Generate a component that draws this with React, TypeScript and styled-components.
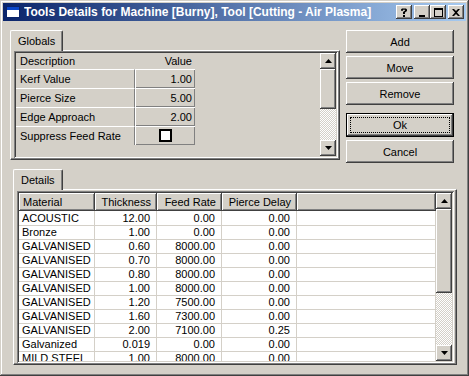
import styled, { createGlobalStyle, css } from "styled-components";

const GlobalStyle = createGlobalStyle`
  html, body { margin: 0; padding: 0; background: #d4d0c8; }
  * { box-sizing: border-box; }
`;

const raised = css`
  box-shadow: inset -1px -1px #404040, inset 1px 1px #ffffff, inset -2px -2px #808080, inset 2px 2px #d4d0c8;
`;

const sunken = css`
  box-shadow: inset 1px 1px #808080, inset -1px -1px #ffffff, inset 2px 2px #404040, inset -2px -2px #d4d0c8;
`;

const Window = styled.div`
  width: 469px;
  height: 376px;
  padding: 3px;
  background: #d4d0c8;
  font-family: "Liberation Sans", Arial, sans-serif;
  font-size: 11px;
  color: #000;
  display: flex;
  flex-direction: column;
  overflow: hidden;
  box-shadow: inset -1px -1px #404040, inset 1px 1px #d4d0c8, inset -2px -2px #808080, inset 2px 2px #ffffff;
`;

const TitleBar = styled.div`
  height: 18px;
  display: flex;
  align-items: center;
  padding: 0 2px 0 2px;
  background: linear-gradient(to right, #0a246a, #a6caf0);
  color: #fff;
  font-weight: bold;
  font-size: 12px;
`;

const TitleIcon = styled.svg`
  width: 16px;
  height: 16px;
  margin-right: 3px;
  flex: none;
`;

const TitleText = styled.span`
  flex: 1;
  white-space: nowrap;
  overflow: hidden;
`;

const CaptionButton = styled.div<{ $gap?: boolean }>`
  width: 16px;
  height: 14px;
  background: #d4d0c8;
  ${raised};
  display: flex;
  align-items: center;
  justify-content: center;
  margin-left: ${(p) => (p.$gap ? "2px" : "0")};
`;

const Body = styled.div`
  flex: 1;
  display: flex;
  flex-direction: column;
  padding: 9px 8px 0 7px;
`;

const TopRow = styled.div`
  display: flex;
  gap: 6px;
`;

const TabControl = styled.div<{ $width: number; $indent?: number; $top?: number }>`
  width: ${(p) => p.$width}px;
  margin-left: ${(p) => p.$indent ?? 0}px;
  margin-top: ${(p) => p.$top ?? 0}px;
  display: flex;
  flex-direction: column;
`;

const TabStrip = styled.div`
  display: flex;
  height: 20px;
`;

const Tab = styled.div`
  height: 21px;
  padding: 3px 7px 0 7px;
  background: #d4d0c8;
  border-top: 1px solid #fff;
  border-left: 1px solid #fff;
  border-right: 1px solid #404040;
  border-radius: 2px 2px 0 0;
  box-shadow: inset -1px 0 #808080;
  position: relative;
  z-index: 1;
  line-height: 14px;
`;

const TabPage = styled.div<{ $height: number; $pad: string }>`
  height: ${(p) => p.$height}px;
  padding: ${(p) => p.$pad};
  border-top: 1px solid #fff;
  border-left: 1px solid #fff;
  border-right: 1px solid #404040;
  border-bottom: 1px solid #404040;
  box-shadow: inset -1px -1px #808080;
  display: flex;
`;

const SunkenBox = styled.div`
  flex: 1;
  display: flex;
  padding: 2px;
  ${sunken};
  background: #d4d0c8;
  overflow: hidden;
`;

const PropList = styled.div`
  flex: 1;
  display: flex;
  flex-direction: column;
`;

const PropHeader = styled.div`
  height: 16px;
  display: grid;
  grid-template-columns: 119px 60px;
  align-items: center;
  & > span:first-child { padding-left: 4px; }
  & > span:last-child { text-align: right; padding-right: 3px; }
`;

const PropRow = styled.div`
  height: 19px;
  display: grid;
  grid-template-columns: 119px 60px;
`;

const PropName = styled.div`
  border-top: 1px solid #fff;
  border-right: 1px solid #808080;
  padding-left: 4px;
  display: flex;
  align-items: center;
`;

const PropValue = styled.div`
  box-shadow: inset 1px 1px #fff, inset -1px -1px #808080;
  display: flex;
  align-items: center;
  justify-content: flex-end;
  padding-right: 3px;
`;

const CheckCell = styled(PropValue)`
  justify-content: center;
  padding-right: 0;
`;

const CheckBox = styled.div`
  width: 13px;
  height: 13px;
  background: #fff;
  border: 2px solid #000;
`;

const ScrollBar = styled.div<{ $thumb: number }>`
  width: 16px;
  flex: none;
  display: flex;
  flex-direction: column;
  & > .thumb { height: ${(p) => p.$thumb}px; }
`;

const ScrollButton = styled.div`
  height: 16px;
  background: #d4d0c8;
  ${raised};
  display: flex;
  align-items: center;
  justify-content: center;
`;

const Thumb = styled.div`
  background: #d4d0c8;
  ${raised};
`;

const Track = styled.div`
  flex: 1;
  background-image: conic-gradient(#ffffff 25%, #d4d0c8 0 50%, #ffffff 0 75%, #d4d0c8 0);
  background-size: 2px 2px;
`;

const ButtonColumn = styled.div`
  width: 108px;
  display: flex;
  flex-direction: column;
  gap: 3px;
`;

const Button = styled.div<{ $default?: boolean }>`
  height: 23px;
  background: #d4d0c8;
  ${raised};
  display: flex;
  align-items: center;
  justify-content: center;
  ${(p) =>
    p.$default &&
    css`
      height: 24px;
      margin-top: 5px;
      border: 1px solid #000;
      position: relative;
      &::after {
        content: "";
        position: absolute;
        inset: 3px;
        border: 1px dotted #000;
      }
    `}
`;

const Table = styled.div`
  flex: 1;
  display: flex;
  flex-direction: column;
  overflow: hidden;
  background: #fff;
`;

const cols = "76px 62px 65px 75px 1fr";

const HeadRow = styled.div`
  height: 18px;
  flex: none;
  display: grid;
  grid-template-columns: ${cols};
  background: #d4d0c8;
`;

const HeadCell = styled.div<{ $right?: boolean }>`
  ${raised};
  display: flex;
  align-items: center;
  justify-content: ${(p) => (p.$right ? "flex-end" : "flex-start")};
  padding: 0 ${(p) => (p.$right ? "6px" : "0")} 0 ${(p) => (p.$right ? "0" : "4px")};
  white-space: nowrap;
`;

const DataRow = styled.div`
  height: 14px;
  flex: none;
  display: grid;
  grid-template-columns: ${cols};
`;

const DataCell = styled.div<{ $right?: boolean }>`
  border-right: 1px solid #d4d0c8;
  border-bottom: 1px solid #d4d0c8;
  display: flex;
  align-items: center;
  justify-content: ${(p) => (p.$right ? "flex-end" : "flex-start")};
  padding: 1px ${(p) => (p.$right ? "6px" : "0")} 0 ${(p) => (p.$right ? "0" : "3px")};
  white-space: nowrap;
  line-height: 13px;
`;

const Up = () => (
  <svg width="7" height="4" viewBox="0 0 7 4">
    <polygon points="3.5,0 7,4 0,4" fill="#000" />
  </svg>
);

const Down = () => (
  <svg width="7" height="4" viewBox="0 0 7 4">
    <polygon points="0,0 7,0 3.5,4" fill="#000" />
  </svg>
);

const rows: [string, string, string, string][] = [
  ["ACOUSTIC", "12.00", "0.00", "0.00"],
  ["Bronze", "1.00", "0.00", "0.00"],
  ["GALVANISED", "0.60", "8000.00", "0.00"],
  ["GALVANISED", "0.70", "8000.00", "0.00"],
  ["GALVANISED", "0.80", "8000.00", "0.00"],
  ["GALVANISED", "1.00", "8000.00", "0.00"],
  ["GALVANISED", "1.20", "7500.00", "0.00"],
  ["GALVANISED", "1.60", "7300.00", "0.00"],
  ["GALVANISED", "2.00", "7100.00", "0.25"],
  ["Galvanized", "0.019", "0.00", "0.00"],
  ["MILD STEEL", "1.00", "8000.00", "0.00"],
];

const props = [
  ["Kerf Value", "1.00"],
  ["Pierce Size", "5.00"],
  ["Edge Approach", "2.00"],
];

export default function App() {
  return (
    <>
      <GlobalStyle />
      <Window>
        <TitleBar>
          <TitleIcon viewBox="0 0 16 16">
            <rect x="1.5" y="2.5" width="13" height="11" fill="#fff" stroke="#0a246a" />
            <rect x="2" y="3" width="12" height="3" fill="#0a46c8" />
          </TitleIcon>
          <TitleText>Tools Details for Machine [Burny], Tool [Cutting - Air Plasma]</TitleText>
          <CaptionButton>
            <svg width="8" height="9" viewBox="0 0 8 9">
              <path d="M1 1.5 L2 0.5 H6 L7 1.5 V3 L5 4.5 V6 H3 V4 L5 2.6 V1.8 H3 V2.8 H1 Z M3 7 H5 V9 H3 Z" fill="#000" />
            </svg>
          </CaptionButton>
          <CaptionButton $gap>
            <svg width="8" height="9" viewBox="0 0 8 9">
              <rect x="1" y="7" width="6" height="2" fill="#000" />
            </svg>
          </CaptionButton>
          <CaptionButton>
            <svg width="9" height="9" viewBox="0 0 9 9">
              <rect x="0.5" y="0.5" width="8" height="8" fill="none" stroke="#000" />
              <rect x="0" y="0" width="9" height="2" fill="#000" />
            </svg>
          </CaptionButton>
          <CaptionButton $gap>
            <svg width="8" height="7" viewBox="0 0 8 7">
              <path d="M0 0 H2 L4 2 L6 0 H8 L5 3.5 L8 7 H6 L4 5 L2 7 H0 L3 3.5 Z" fill="#000" />
            </svg>
          </CaptionButton>
        </TitleBar>
        <Body>
          <TopRow>
            <TabControl $width={330}>
              <TabStrip>
                <Tab>Globals</Tab>
              </TabStrip>
              <TabPage $height={110} $pad="0 1px 1px 3px">
                <SunkenBox>
                  <PropList>
                    <PropHeader>
                      <span>Description</span>
                      <span>Value</span>
                    </PropHeader>
                    {props.map(([name, value]) => (
                      <PropRow key={name}>
                        <PropName>{name}</PropName>
                        <PropValue>{value}</PropValue>
                      </PropRow>
                    ))}
                    <PropRow>
                      <PropName>Suppress Feed Rate</PropName>
                      <CheckCell>
                        <CheckBox />
                      </CheckCell>
                    </PropRow>
                  </PropList>
                  <ScrollBar $thumb={40}>
                    <ScrollButton>
                      <Up />
                    </ScrollButton>
                    <Thumb className="thumb" />
                    <Track />
                    <ScrollButton>
                      <Down />
                    </ScrollButton>
                  </ScrollBar>
                </SunkenBox>
              </TabPage>
            </TabControl>
            <ButtonColumn>
              <Button>Add</Button>
              <Button>Move</Button>
              <Button>Remove</Button>
              <Button $default>Ok</Button>
              <Button>Cancel</Button>
            </ButtonColumn>
          </TopRow>
          <TabControl $width={444} $indent={3} $top={6}>
            <TabStrip>
              <Tab>Details</Tab>
            </TabStrip>
            <TabPage $height={176} $pad="1px 2px 1px 3px">
              <SunkenBox>
                <Table>
                  <HeadRow>
                    <HeadCell>Material</HeadCell>
                    <HeadCell $right>Thickness</HeadCell>
                    <HeadCell $right>Feed Rate</HeadCell>
                    <HeadCell $right>Pierce Delay</HeadCell>
                    <HeadCell />
                  </HeadRow>
                  {rows.map((r, i) => (
                    <DataRow key={i}>
                      <DataCell>{r[0]}</DataCell>
                      <DataCell $right>{r[1]}</DataCell>
                      <DataCell $right>{r[2]}</DataCell>
                      <DataCell $right>{r[3]}</DataCell>
                      <DataCell />
                    </DataRow>
                  ))}
                </Table>
                <ScrollBar $thumb={84}>
                  <ScrollButton>
                    <Up />
                  </ScrollButton>
                  <Thumb className="thumb" />
                  <Track />
                  <ScrollButton>
                    <Down />
                  </ScrollButton>
                </ScrollBar>
              </SunkenBox>
            </TabPage>
          </TabControl>
        </Body>
      </Window>
    </>
  );
}
